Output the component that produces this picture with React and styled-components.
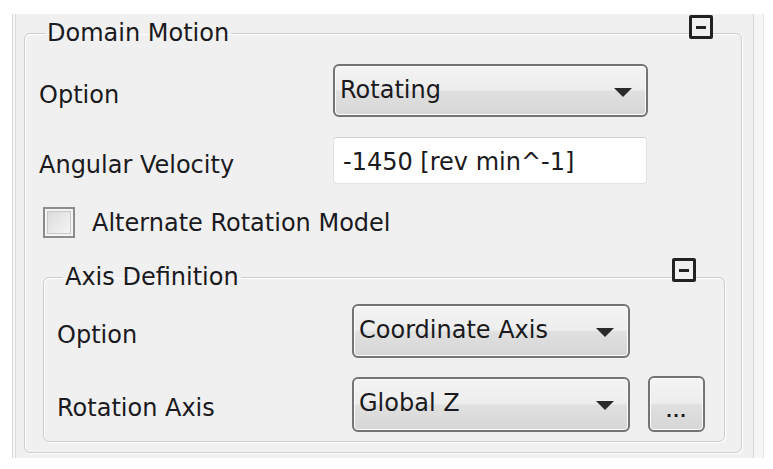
import React from 'react';
import styled, { createGlobalStyle } from 'styled-components';

const GlobalStyle = createGlobalStyle`
  html, body {
    margin: 0;
    padding: 0;
    background: #ffffff;
  }
  body {
    font-family: "DejaVu Sans", "Liberation Sans", sans-serif;
    font-size: 24px;
    color: #1a1a20;
  }
`;

const Page = styled.div`
  padding: 14px 0 0 12px;
  width: 773px;
  height: 469px;
  box-sizing: border-box;
`;

const Panel = styled.div`
  display: flex;
  width: 751px;
  height: 444px;
  background: #f0f0f0;
  border-left: 1px solid #d6d6d6;
  box-shadow: inset 2px 0 0 #fafafa, inset 3px 0 0 #dcdcdc;
`;

const PanelBody = styled.div`
  flex: 1;
  padding: 7px 11px 0 11px;
`;

const ScrollStrip = styled.div`
  width: 9px;
  background: #f6f6f6;
  border-left: 1px solid #d8d8d8;
  border-right: 1px solid #e4e4e4;
`;

const Group = styled.fieldset`
  position: relative;
  margin: 0;
  padding: ${p => (p.$inner ? '15px 16px 9px 13px' : '19px 16px 10px 14px')};
  border: 1px solid #cdcdcd;
  border-radius: 6px;
  box-shadow: inset 1px 1px 0 #ffffff, 1px 1px 0 #ffffff;
  min-width: 0;
`;

const Legend = styled.legend`
  padding: 0 2px;
  margin-left: 6px;
  line-height: 24px;
  font-size: 24px;
`;

const Collapse = styled.div`
  position: absolute;
  top: ${p => (p.$inner ? '-31px' : '-30px')};
  right: 28px;
  width: 24px;
  height: 24px;
  box-sizing: border-box;
  border: 3px solid #222;
  border-radius: 2px;
  background: #f0f0f0;
  display: flex;
  align-items: center;
  justify-content: center;

  &::after {
    content: '';
    width: 10px;
    height: 3px;
    background: #222;
  }
`;

const Form = styled.div`
  display: grid;
  grid-template-columns: ${p => (p.$inner ? '295px' : '294px')} auto;
  align-items: center;
  row-gap: ${p => p.$gap || 20}px;
  justify-items: start;
`;

const Label = styled.span`
  padding-top: 8px;
  white-space: nowrap;
`;

const Controls = styled.div`
  display: flex;
  align-items: center;
  gap: 18px;
`;

const Combo = styled.div`
  position: relative;
  display: flex;
  align-items: center;
  width: ${p => p.$w}px;
  height: ${p => p.$h || 53}px;
  box-sizing: border-box;
  padding: 0 0 2px 5px;
  border: 2px solid #747474;
  border-radius: 6px;
  background: linear-gradient(#f4f4f4 0%, #ededed 48%, #e0e0e0 52%, #d6d6d6 100%);
  box-shadow: inset 0 0 0 1px #fbfbfb;
  white-space: nowrap;
`;

const Arrow = styled.span`
  position: absolute;
  right: 14px;
  top: 50%;
  margin-top: -3px;
  width: 0;
  height: 0;
  border-left: 9px solid transparent;
  border-right: 9px solid transparent;
  border-top: 9px solid #2a2a2a;
`;

const TextInput = styled.div`
  display: flex;
  align-items: center;
  width: 314px;
  height: 47px;
  box-sizing: border-box;
  padding: 3px 0 0 9px;
  background: #ffffff;
  border: 1px solid #e2e2e2;
  border-top-color: #d2d2d2;
  border-radius: 4px;
  white-space: nowrap;
`;

const DotsButton = styled.div`
  width: 57px;
  height: 56px;
  box-sizing: border-box;
  display: flex;
  align-items: flex-end;
  justify-content: center;
  padding-bottom: 10px;
  border: 2px solid #747474;
  border-radius: 6px;
  background: linear-gradient(#f4f4f4 0%, #ededed 48%, #e0e0e0 52%, #d6d6d6 100%);
  box-shadow: inset 0 0 0 1px #fbfbfb;
  font-size: 16px;
  font-weight: bold;
  line-height: 1;
  letter-spacing: 1px;
`;

const CheckRow = styled.label`
  display: flex;
  align-items: center;
  gap: 17px;
  margin: 23px 0 27px 4px;
`;

const CheckBox = styled.span`
  width: 32px;
  height: 31px;
  box-sizing: border-box;
  border: 2px solid #8c8c8c;
  background: linear-gradient(135deg, #d8d8d8, #f8f8f8);
  box-shadow: inset 0 0 0 2px #f4f4f4, inset 0 0 0 3px #c8c8c8;
`;

const InnerWrap = styled.div`
  margin-left: 4px;
`;

function ComboBox({ value, width, height }) {
  return (
    <Combo $w={width} $h={height}>
      {value}
      <Arrow />
    </Combo>
  );
}

export default function App() {
  return (
    <>
      <GlobalStyle />
      <Page>
        <Panel>
          <PanelBody>
            <Group>
              <Legend>Domain Motion</Legend>
              <Collapse />
              <Form $gap={20}>
                <Label>Option</Label>
                <ComboBox value="Rotating" width={315} />
                <Label>Angular Velocity</Label>
                <TextInput>-1450 [rev min^-1]</TextInput>
              </Form>
              <CheckRow>
                <CheckBox />
                <span>Alternate Rotation Model</span>
              </CheckRow>
              <InnerWrap>
                <Group $inner>
                  <Legend $inner>Axis Definition</Legend>
                  <Collapse $inner />
                  <Form $inner $gap={18}>
                    <Label>Option</Label>
                    <ComboBox value="Coordinate Axis" width={278} height={54} />
                    <Label>Rotation Axis</Label>
                    <Controls>
                      <ComboBox value="Global Z" width={278} height={55} />
                      <DotsButton>...</DotsButton>
                    </Controls>
                  </Form>
                </Group>
              </InnerWrap>
            </Group>
          </PanelBody>
          <ScrollStrip />
        </Panel>
      </Page>
    </>
  );
}
